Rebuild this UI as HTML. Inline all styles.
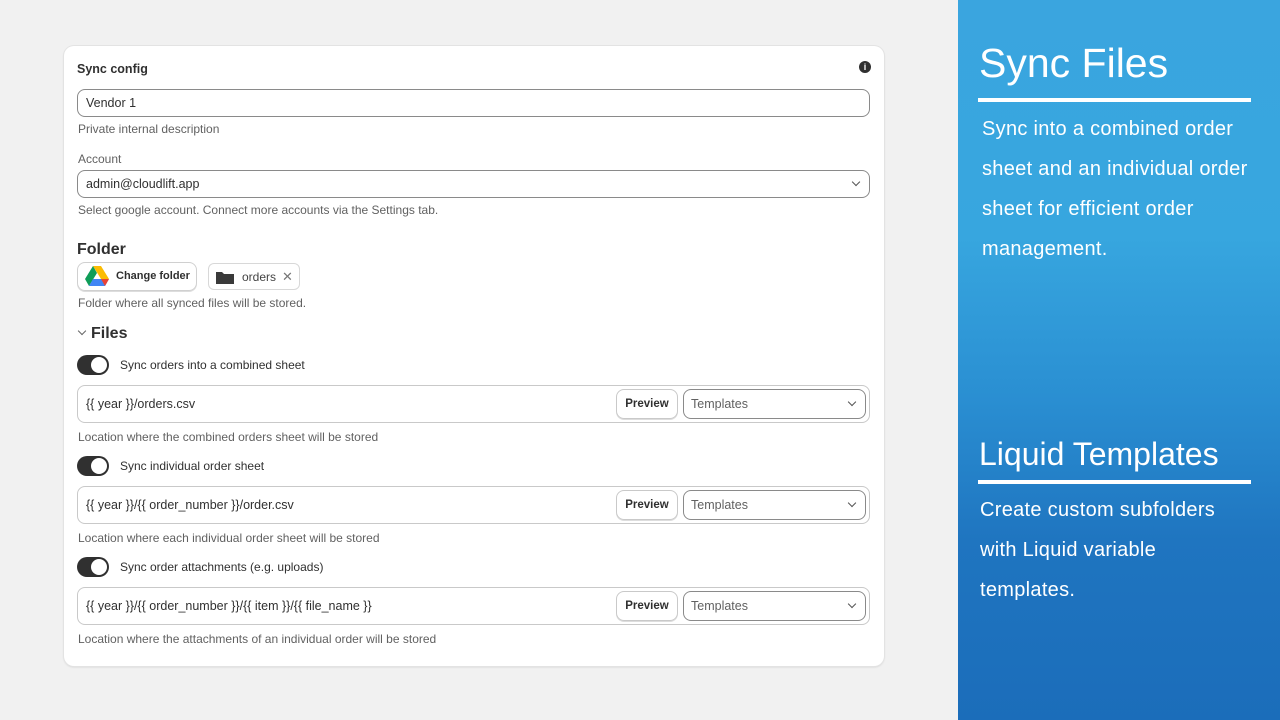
<!DOCTYPE html>
<html><head><meta charset="utf-8"><style>
*{box-sizing:border-box;margin:0;padding:0}
body{width:1280px;height:720px;background:#f1f1f1;font-family:"Liberation Sans",sans-serif;position:relative;overflow:hidden;color:#303030}
.card{position:absolute;left:64px;top:46px;width:820px;height:620px;background:#fff;border-radius:10px;box-shadow:0 0 0 1px #e3e3e3,0 1px 2px rgba(0,0,0,.15)}
.a{position:absolute}
.t{font-size:13px}
.help{font-size:12px;color:#616161}
.inp{position:absolute;left:13px;width:793px;height:28px;border:1px solid #8a8a8a;border-radius:8px;font-size:12.5px;padding:6px 8px;color:#303030}
.box{position:absolute;left:13px;width:793px;height:38px;border:1px solid #c9c9c9;border-radius:8px}
.box .v{position:absolute;left:8px;top:11px;font-size:12.5px}
.pv{position:absolute;left:538px;top:3px;width:62px;height:30px;border:1px solid #c9c9c9;border-radius:8px;font-size:11.5px;font-weight:bold;text-align:center;line-height:28px;box-shadow:0 1px 0 #ddd}
.tp{position:absolute;left:605px;top:3px;width:183px;height:30px;border:1px solid #8a8a8a;border-radius:8px;font-size:12.5px;color:#616161;padding:7px 7px}
.chev{position:absolute;right:10px;top:9px;width:6px;height:6px;border-right:1.3px solid #555;border-bottom:1.3px solid #555;transform:rotate(45deg)}
.tg{position:absolute;left:13px;width:32px;height:20px;border-radius:10px;background:#303030}
.tg:after{content:"";position:absolute;right:2px;top:2px;width:16px;height:16px;border-radius:50%;background:#fff}
.side{position:absolute;left:958px;top:0;width:322px;height:720px;background:linear-gradient(#3aa5df 0%,#37a6df 33%,#2a8fd2 55%,#1f75c0 75%,#1b6dba 100%);color:#fff;font-family:"Liberation Sans",sans-serif}
.side h1{position:absolute;left:21px;font-weight:normal;font-size:41px;white-space:nowrap}
.side .hr{position:absolute;left:20px;width:273px;height:4px;background:#fff}
.side p{position:absolute;font-size:20px;line-height:40px;white-space:nowrap;letter-spacing:0.3px}
</style></head><body>
<div class="card">
<div class="a t" style="left:13px;top:16px;font-weight:bold;font-size:12.5px">Sync config</div>
<div class="a" style="left:795px;top:15px;width:12px;height:12px;border-radius:50%;background:#303030;color:#fff;font-size:9px;text-align:center;line-height:12px;font-weight:bold">i</div>
<div class="inp" style="top:43px">Vendor 1</div>
<div class="a help" style="left:14px;top:76px">Private internal description</div>
<div class="a help" style="left:14px;top:106px">Account</div>
<div class="inp" style="top:124px">admin@cloudlift.app<span class="chev" style="top:8px"></span></div>
<div class="a help" style="left:14px;top:157px">Select google account. Connect more accounts via the Settings tab.</div>
<div class="a" style="left:13px;top:195px;font-size:16px;font-weight:bold">Folder</div>
<div class="a" style="left:13px;top:216px;width:120px;height:29px;border:1px solid #d0d0d0;border-radius:8px;box-shadow:0 1px 0 #ddd">
<svg class="a" style="left:7px;top:3px" width="24" height="21" viewBox="0 0 24 21"><path d="M8 0h8l8 13h-8z" fill="#fbbc04"/><path d="M8 0L0 13l4 7 8-13z" fill="#0f9d58"/><path d="M4 20h16l4-7H8z" fill="#4285f4"/><path d="M20 20l4-7h-8z" fill="#ea4335"/></svg>
<span class="a" style="left:38px;top:7px;font-size:11px;font-weight:bold">Change folder</span></div>
<div class="a" style="left:144px;top:217px;width:92px;height:27px;border:1px solid #d8d8d8;border-radius:6px">
<svg class="a" style="left:7px;top:7px" width="18" height="13"><path d="M0 1h6l2 2h10v10H0z" fill="#3a3a3a"/></svg>
<span class="a" style="left:33px;top:6px;font-size:12px;color:#444">orders</span><span class="a" style="left:73px;top:5px;font-size:13px;color:#777">✕</span></div>
<div class="a help" style="left:14px;top:250px">Folder where all synced files will be stored.</div>
<div class="a" style="left:15px;top:282px;width:6px;height:6px;border-right:1.3px solid #666;border-bottom:1.3px solid #666;transform:rotate(45deg)"></div>
<div class="a" style="left:27px;top:279px;font-size:16px;font-weight:bold">Files</div>

<div class="tg" style="top:309px"></div><div class="a t" style="left:56px;top:312px;font-size:12px">Sync orders into a combined sheet</div>
<div class="box" style="top:339px"><span class="v">{{ year }}/orders.csv</span><div class="pv">Preview</div><div class="tp">Templates<span class="chev"></span></div></div>
<div class="a help" style="left:14px;top:384px">Location where the combined orders sheet will be stored</div>

<div class="tg" style="top:410px"></div><div class="a t" style="left:56px;top:413px;font-size:12px">Sync individual order sheet</div>
<div class="box" style="top:440px"><span class="v">{{ year }}/{{ order_number }}/order.csv</span><div class="pv">Preview</div><div class="tp">Templates<span class="chev"></span></div></div>
<div class="a help" style="left:14px;top:485px">Location where each individual order sheet will be stored</div>

<div class="tg" style="top:511px"></div><div class="a t" style="left:56px;top:514px;font-size:12px">Sync order attachments (e.g. uploads)</div>
<div class="box" style="top:541px"><span class="v">{{ year }}/{{ order_number }}/{{ item }}/{{ file_name }}</span><div class="pv">Preview</div><div class="tp">Templates<span class="chev"></span></div></div>
<div class="a help" style="left:14px;top:586px">Location where the attachments of an individual order will be stored</div>
</div>
<div class="side">
<h1 style="top:40px">Sync Files</h1>
<div class="hr" style="top:98px"></div>
<p style="left:24px;top:109px">Sync into a combined order<br>sheet and an individual order<br>sheet for efficient order<br>management.</p>
<h1 style="top:436px;font-size:32px">Liquid Templates</h1>
<div class="hr" style="top:480px"></div>
<p style="left:22px;top:490px">Create custom subfolders<br>with Liquid variable<br>templates.</p>
</div>
</body></html>
